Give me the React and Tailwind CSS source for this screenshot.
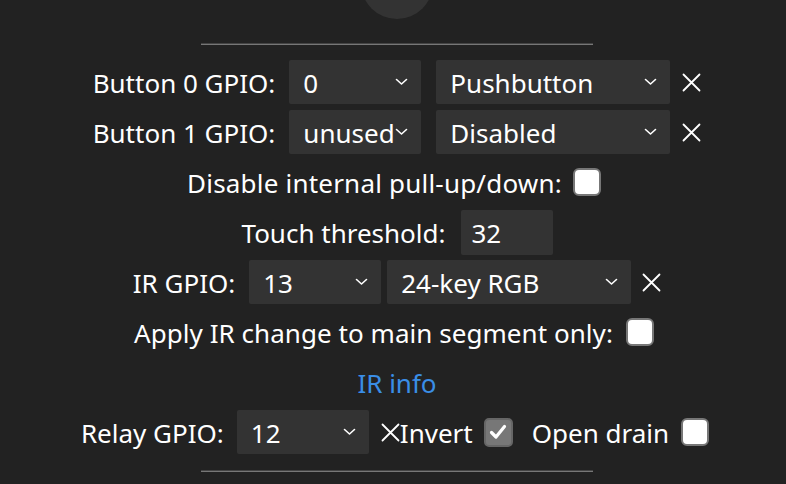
import React from "react";

const Chevron = () => (
  <svg width="13" height="8" viewBox="0 0 13 8" className="shrink-0">
    <path d="M1.5 1.5 L6.5 6 L11.5 1.5" fill="none" stroke="#fff" strokeWidth="1.6" strokeLinecap="round" strokeLinejoin="round" />
  </svg>
);

const Cross = ({ className = "" }) => (
  <svg width="19" height="19" viewBox="0 0 19 19" className={"shrink-0 " + className}>
    <path d="M1.5 1.5 L17.5 17.5 M17.5 1.5 L1.5 17.5" fill="none" stroke="#fff" strokeWidth="1.8" strokeLinecap="round" />
  </svg>
);

const Select = ({ value, w = "w-[132px]" }) => (
  <div className={`${w} h-[44px] bg-[#333] rounded-[2px] flex items-center justify-between pl-[14px] pr-[13px] shrink-0`}>
    <span className="whitespace-nowrap leading-normal pt-[3px]">{value}</span>
    <Chevron />
  </div>
);

const Box = ({ checked }) =>
  checked ? (
    <div className="w-[29px] h-[29px] rounded-[5px] bg-[#777] border-2 border-[#666] flex items-center justify-center shrink-0">
      <svg width="18" height="16" viewBox="0 0 18 16">
        <path d="M2.5 8.5 L7 13 L15.5 2.5" fill="none" stroke="#fff" strokeWidth="3.2" strokeLinecap="round" strokeLinejoin="round" />
      </svg>
    </div>
  ) : (
    <div className="w-[28px] h-[28px] rounded-[6px] bg-white border-2 border-[#777] shrink-0" />
  );

const T = ({ children, className = "" }) => (
  <span className={"leading-normal pt-[3px] " + className}>{children}</span>
);

const Row = ({ children }) => (
  <div className="h-[50px] flex items-center justify-center whitespace-nowrap">{children}</div>
);

export default function App() {
  return (
    <div
      className="min-h-screen bg-[#222] text-white text-[26px] leading-none pl-2 overflow-hidden"
      style={{ fontFamily: '"Noto Sans", "Open Sans", sans-serif' }}
    >
      <div className="w-[72px] h-[72px] rounded-full bg-[#333] mx-auto -mt-[53px]" />
      <div className="w-[392px] mx-auto mt-[24px] border-t border-t-[#444] border-b border-b-[#777] h-[2px]" />
      <div className="mt-[12px]">
        <Row>
          <T>Button 0 GPIO:</T>
          <div className="ml-[14px]"><Select value="0" /></div>
          <div className="ml-[15px]"><Select value="Pushbutton" w="w-[234px]" /></div>
          <Cross className="ml-[12px]" />
        </Row>
        <Row>
          <T>Button 1 GPIO:</T>
          <div className="ml-[14px]"><Select value="unused" /></div>
          <div className="ml-[15px]"><Select value="Disabled" w="w-[234px]" /></div>
          <Cross className="ml-[12px]" />
        </Row>
        <Row>
          <T className="tracking-[0.2px]">Disable internal pull-up/down:</T>
          <div className="ml-[11px] mr-[6px]"><Box /></div>
        </Row>
        <Row>
          <T>Touch threshold:</T>
          <div className="ml-[15px] w-[92px] h-[45px] bg-[#333] rounded-[2px] flex items-center pl-[11px]">
            <T>32</T>
          </div>
        </Row>
        <Row>
          <T>IR GPIO:</T>
          <div className="ml-[14px]"><Select value="13" /></div>
          <div className="ml-[6px]"><Select value="24-key RGB" w="w-[244px]" /></div>
          <Cross className="ml-[11px]" />
        </Row>
        <Row>
          <T className="tracking-[0.05px]">Apply IR change to main segment only:</T>
          <div className="ml-[13px] mr-[6px]"><Box /></div>
        </Row>
        <Row>
          <T className="text-[#3a8ee6]">IR info</T>
        </Row>
        <Row>
          <T>Relay GPIO:</T>
          <div className="ml-[13px]"><Select value="12" /></div>
          <Cross className="ml-[12px]" />
          <T>Invert</T>
          <div className="ml-[11px]"><Box checked /></div>
          <T className="ml-[19px]">Open drain</T>
          <div className="ml-[12px] mr-[4px]"><Box /></div>
        </Row>
      </div>
      <div className="w-[392px] mx-auto mt-[13px] border-t border-t-[#444] border-b border-b-[#777] h-[2px]" />
    </div>
  );
}
